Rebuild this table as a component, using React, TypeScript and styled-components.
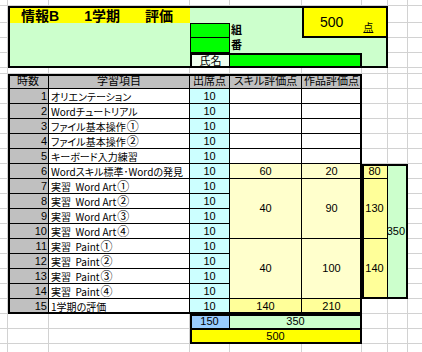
import React from 'react';
import styled, { createGlobalStyle } from 'styled-components';

// column widths / row heights of the sheet, in px
const COLS = [8, 41, 141, 40, 72, 60, 26, 20];
const ROWS = [6, 17, 15, 15, 15, 6, 15, ...Array(15).fill(15), 15, 15];

const GRID = '#d2d2d2';

const gridLines = () => {
  const layers: string[] = [];
  let x = 0;
  COLS.forEach(w => {
    x += w;
    layers.push(`linear-gradient(${GRID}, ${GRID}) ${x - 1}px 0 / 1px 100% no-repeat`);
  });
  let y = 0;
  ROWS.forEach(h => {
    y += h;
    layers.push(`linear-gradient(${GRID}, ${GRID}) 0 ${y - 1}px / 100% 1px no-repeat`);
  });
  return layers.join(',\n');
};

const lessons = [
  'オリエンテーション',
  'Wordチュートリアル',
  'ファイル基本操作①',
  'ファイル基本操作②',
  'キーボード入力練習',
  'Wordスキル標準･Wordの発見',
  '実習  Word Art①',
  '実習  Word Art②',
  '実習  Word Art③',
  '実習  Word Art④',
  '実習  Paint①',
  '実習  Paint②',
  '実習  Paint③',
  '実習  Paint④',
  '1学期の評価',
];

const blocks = [
  { from: 6, to: 6, skill: 60, work: 20, sub: 80 },
  { from: 7, to: 10, skill: 40, work: 90, sub: 130 },
  { from: 11, to: 14, skill: 40, work: 100, sub: 140 },
];

// lesson k sits on grid row 7 + k
const rowOf = (from: number, to: number = from) => `${7 + from} / ${8 + to}`;

// circled digits come out tiny at the item size, so give them their own span
const withCircled = (text: string) =>
  text.split(/([①-⑳])/).map((part, i) =>
    /[①-⑳]/.test(part) ? <Circled key={i}>{part}</Circled> : part
  );

const GlobalStyle = createGlobalStyle`
  html, body {
    margin: 0;
    background: #fff;
  }
  body {
    font-family: "Liberation Sans", "Noto Sans CJK JP", sans-serif;
    font-feature-settings: "palt";
    color: #000;
  }
`;

const App: React.FC = () => {
  return (
    <React.Fragment>
      <GlobalStyle />
      <Sheet>
        <TopPanel />
        <TitleBar>
          <span>情報B</span>
          <span>1学期</span>
          <span>評価</span>
        </TitleBar>
        <ScoreBox>
          <ScoreValue>500</ScoreValue>
          <ScoreUnit>点</ScoreUnit>
        </ScoreBox>
        <ClassField />
        <NumberField />
        <IdLabel $row={3}>組</IdLabel>
        <IdLabel $row={4}>番</IdLabel>
        <NameLabel>氏名</NameLabel>
        <NameField />
        <Frame $row="2 / 6" $col="2 / 8" />

        <HeadCell $row={7} $col={2}>時数</HeadCell>
        <HeadCell $row={7} $col={3}>学習項目</HeadCell>
        <HeadCell $row={7} $col={4}>出席点</HeadCell>
        <HeadCell $row={7} $col={5}>スキル評価点</HeadCell>
        <HeadCell $row={7} $col={6}>作品評価点</HeadCell>

        {lessons.map((name, i) => (
          <React.Fragment key={name}>
            <NumCell $row={8 + i} $col={2}>{i + 1}</NumCell>
            <ItemCell $row={8 + i} $col={3}>{withCircled(name)}</ItemCell>
            <AttendCell $row={8 + i} $col={4}>10</AttendCell>
          </React.Fragment>
        ))}

        {[1, 2, 3, 4, 5].map(k => (
          <React.Fragment key={k}>
            <PointCell $row={rowOf(k)} $col={5} />
            <PointCell $row={rowOf(k)} $col={6} />
          </React.Fragment>
        ))}

        {blocks.map(b => (
          <React.Fragment key={b.from}>
            <PointCell $row={rowOf(b.from, b.to)} $col={5} $bg="#ffffcc">{b.skill}</PointCell>
            <PointCell $row={rowOf(b.from, b.to)} $col={6} $bg="#ffffcc">{b.work}</PointCell>
            <PointCell $row={rowOf(b.from, b.to)} $col={7} $bg="#ffff99">{b.sub}</PointCell>
          </React.Fragment>
        ))}
        <TotalCell>350</TotalCell>
        <Frame $row={rowOf(6, 14)} $col="7 / 9" />

        <PointCell $row={rowOf(15)} $col={5} $bg="#ffff99">140</PointCell>
        <PointCell $row={rowOf(15)} $col={6} $bg="#ffff99">210</PointCell>
        <Frame $row="7 / 23" $col="2 / 7" />

        <PointCell $row={23} $col={4} $bg="#99ccff">150</PointCell>
        <PointCell $row={23} $col="5 / 7" $bg="#ccffcc">350</PointCell>
        <GrandCell>500</GrandCell>
        <Frame $row="23 / 25" $col="4 / 7" />
      </Sheet>
    </React.Fragment>
  );
};

export default App;

type At = { $row: string | number; $col: string | number };

const Sheet = styled.div`
  display: grid;
  grid-template-columns: ${COLS.map(w => `${w}px`).join(' ')} 1fr;
  grid-template-rows: ${ROWS.map(h => `${h}px`).join(' ')} 1fr;
  width: 422px;
  height: 352px;
  overflow: hidden;
  background: ${gridLines()}, #fff;
`;

const Frame = styled.div<At>`
  grid-row: ${p => p.$row};
  grid-column: ${p => p.$col};
  border: 2px solid #000;
  pointer-events: none;
`;

/* ---- top panel ---- */

const TopPanel = styled.div`
  grid-row: 2 / 6;
  grid-column: 2 / 8;
  background: #ccffcc;
`;

const TitleBar = styled.div`
  grid-row: 2;
  grid-column: 2 / 4;
  display: flex;
  align-items: center;
  gap: 25px;
  padding: 2px 0 0 13px;
  background: #ffff00;
  font-size: 14px;
  font-weight: bold;
  line-height: 1;
`;

const ScoreBox = styled.div`
  grid-row: 2 / 4;
  grid-column: 6 / 8;
  display: flex;
  align-items: center;
  padding-left: 16px;
  background: #ffff00;
  border: 2px solid #000;
`;

const ScoreValue = styled.span`
  font-size: 14px;
  line-height: 1;
`;

const ScoreUnit = styled.span`
  align-self: flex-end;
  margin: 0 0 3px 20px;
  font-size: 10px;
  line-height: 1;
  text-decoration: underline;
`;

const IdField = styled.div`
  grid-column: 4;
  background: #00ff00;
  border: 1px solid #000;
`;

const ClassField = styled(IdField)`
  grid-row: 3;
`;

const NumberField = styled(IdField)`
  grid-row: 4;
  border-top: none;
`;

const IdLabel = styled.div<{ $row: number }>`
  grid-row: ${p => p.$row};
  grid-column: 5;
  display: flex;
  align-items: center;
  padding-left: 1px;
  font-size: 11px;
  font-weight: bold;
  line-height: 1;
`;

const NameLabel = styled.div`
  grid-row: 5;
  grid-column: 4;
  display: flex;
  align-items: center;
  justify-content: center;
  background: #f0fff0;
  border: 2px solid #000;
  border-width: 2px 1px 0 2px;
  font-size: 11px;
  line-height: 1;
`;

const NameField = styled.div`
  grid-row: 5;
  grid-column: 5 / 7;
  background: #00ff00;
  border: 2px solid #000;
  border-width: 2px 2px 0 0;
`;

/* ---- table ---- */

const Cell = styled.div<At & { $bg?: string }>`
  grid-row: ${p => p.$row};
  grid-column: ${p => p.$col};
  display: flex;
  align-items: center;
  justify-content: center;
  padding: 0 2px;
  background: ${p => p.$bg ?? '#fff'};
  border-right: 1px solid #000;
  border-bottom: 1px solid #000;
  font-size: 11px;
  line-height: 13px;
  white-space: pre;
  min-width: 0;
`;

const HeadCell = styled(Cell)`
  background: #c0c0c0;
  padding: 0;
`;

const NumCell = styled(Cell)`
  justify-content: flex-end;
  padding-right: 1px;
  background: #c0c0c0;
`;

const ItemCell = styled(Cell)`
  justify-content: flex-start;
  font-family: "Noto Sans CJK JP", sans-serif;
  font-size: 10px;
`;

const Circled = styled.span`
  display: inline-block;
  margin-left: 1px;
  font-size: 12px;
  line-height: 12px;
  font-feature-settings: normal;
`;

const AttendCell = styled(Cell)`
  background: #ccffff;
`;

const PointCell = styled(Cell)``;

const TotalCell = styled(Cell).attrs({ $row: rowOf(6, 14), $col: 8 })`
  justify-content: flex-end;
  padding: 0 2px 0 0;
  background: #ccffcc;
`;

const GrandCell = styled(Cell).attrs({ $row: 24, $col: '4 / 7' })`
  background: #ffff00;
  border-top: 1px solid #000;
`;
